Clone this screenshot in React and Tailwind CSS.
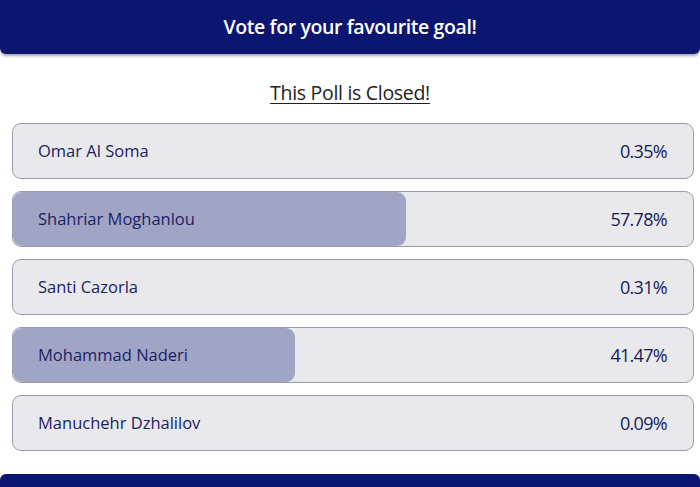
import React from 'react';

const results = [
  { name: 'Omar Al Soma', pct: 0.35 },
  { name: 'Shahriar Moghanlou', pct: 57.78 },
  { name: 'Santi Cazorla', pct: 0.31 },
  { name: 'Mohammad Naderi', pct: 41.47 },
  { name: 'Manuchehr Dzhalilov', pct: 0.09 },
];

const ResultRow = ({ name, pct }) => (
  <div className="relative h-[56px] rounded-[9px] border border-[#9b9cab] bg-[#e9e9eb] overflow-hidden">
    {pct > 5 && (
      <div
        className="absolute left-0 top-0 bottom-0 rounded-[9px] bg-[#a1a5c5]"
        style={{ width: `${pct}%` }}
      />
    )}
    <div className="relative h-full flex items-center justify-between pl-[25px] pr-[26px]">
      <span className="text-[16.5px] font-medium text-[#1b2263] tracking-[0px]">{name}</span>
      <span className="text-[18px] font-medium text-[#161c5a] tracking-[-0.7px]">{pct.toFixed(2)}%</span>
    </div>
  </div>
);

export default function App() {
  return (
    <div className="w-[700px] h-[487px] bg-white overflow-hidden flex flex-col" style={{ fontFamily: '"Open Sans", "Noto Sans", sans-serif' }}>
      <div className="h-[54px] shrink-0 bg-[#0a166f] rounded-b-[6px] shadow-[0_2px_3px_rgba(0,0,0,0.35)] flex items-center justify-center">
        <h1 className="text-[19.5px] font-semibold text-white tracking-[-0.4px]">Vote for your favourite goal!</h1>
      </div>

      <div className="h-[69px] shrink-0 flex items-center justify-center pt-[8px]">
        <span className="text-[19.5px] text-[#222] underline underline-offset-[3px] tracking-[-0.3px]">This Poll is Closed!</span>
      </div>

      <div className="flex flex-col gap-[12px] pl-[12px] pr-[6px]">
        {results.map((r) => (
          <ResultRow key={r.name} name={r.name} pct={r.pct} />
        ))}
      </div>

      <div className="mt-auto h-[13px] shrink-0 bg-[#0a166f] rounded-t-[6px]" />
    </div>
  );
}
